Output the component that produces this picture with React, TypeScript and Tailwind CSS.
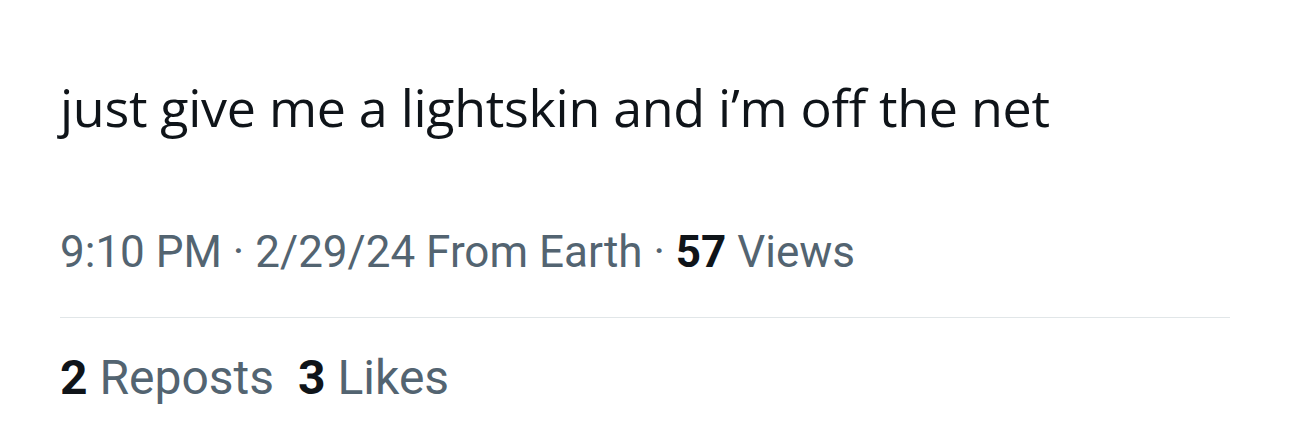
export default function App() {
  return (
    <div className="h-[429px] w-[1290px] bg-white px-[60px] pt-[75px]">
      <p className="font-['Open_Sans',sans-serif] text-[52px] leading-[64px] tracking-[-0.3px] text-[#0f1419]">
        just give me a lightskin and i’m off the net
      </p>
      <div className="mt-[87px] font-['Roboto',sans-serif] text-[44px] leading-[52px] text-[#536471]">
        9:10 PM · 2/29/24 From Earth · <span className="font-bold text-[#0f1419]">57</span> Views
      </div>
      <div className="mt-[39px] h-px w-[1170px] bg-[#e1e6e8]" />
      <div className="mt-[34px] flex gap-[24px] font-['Roboto',sans-serif] text-[48px] leading-[52px] text-[#536471]">
        <span>
          <span className="font-bold text-[#0f1419]">2</span> Reposts
        </span>
        <span>
          <span className="font-bold text-[#0f1419]">3</span> Likes
        </span>
      </div>
    </div>
  )
}
